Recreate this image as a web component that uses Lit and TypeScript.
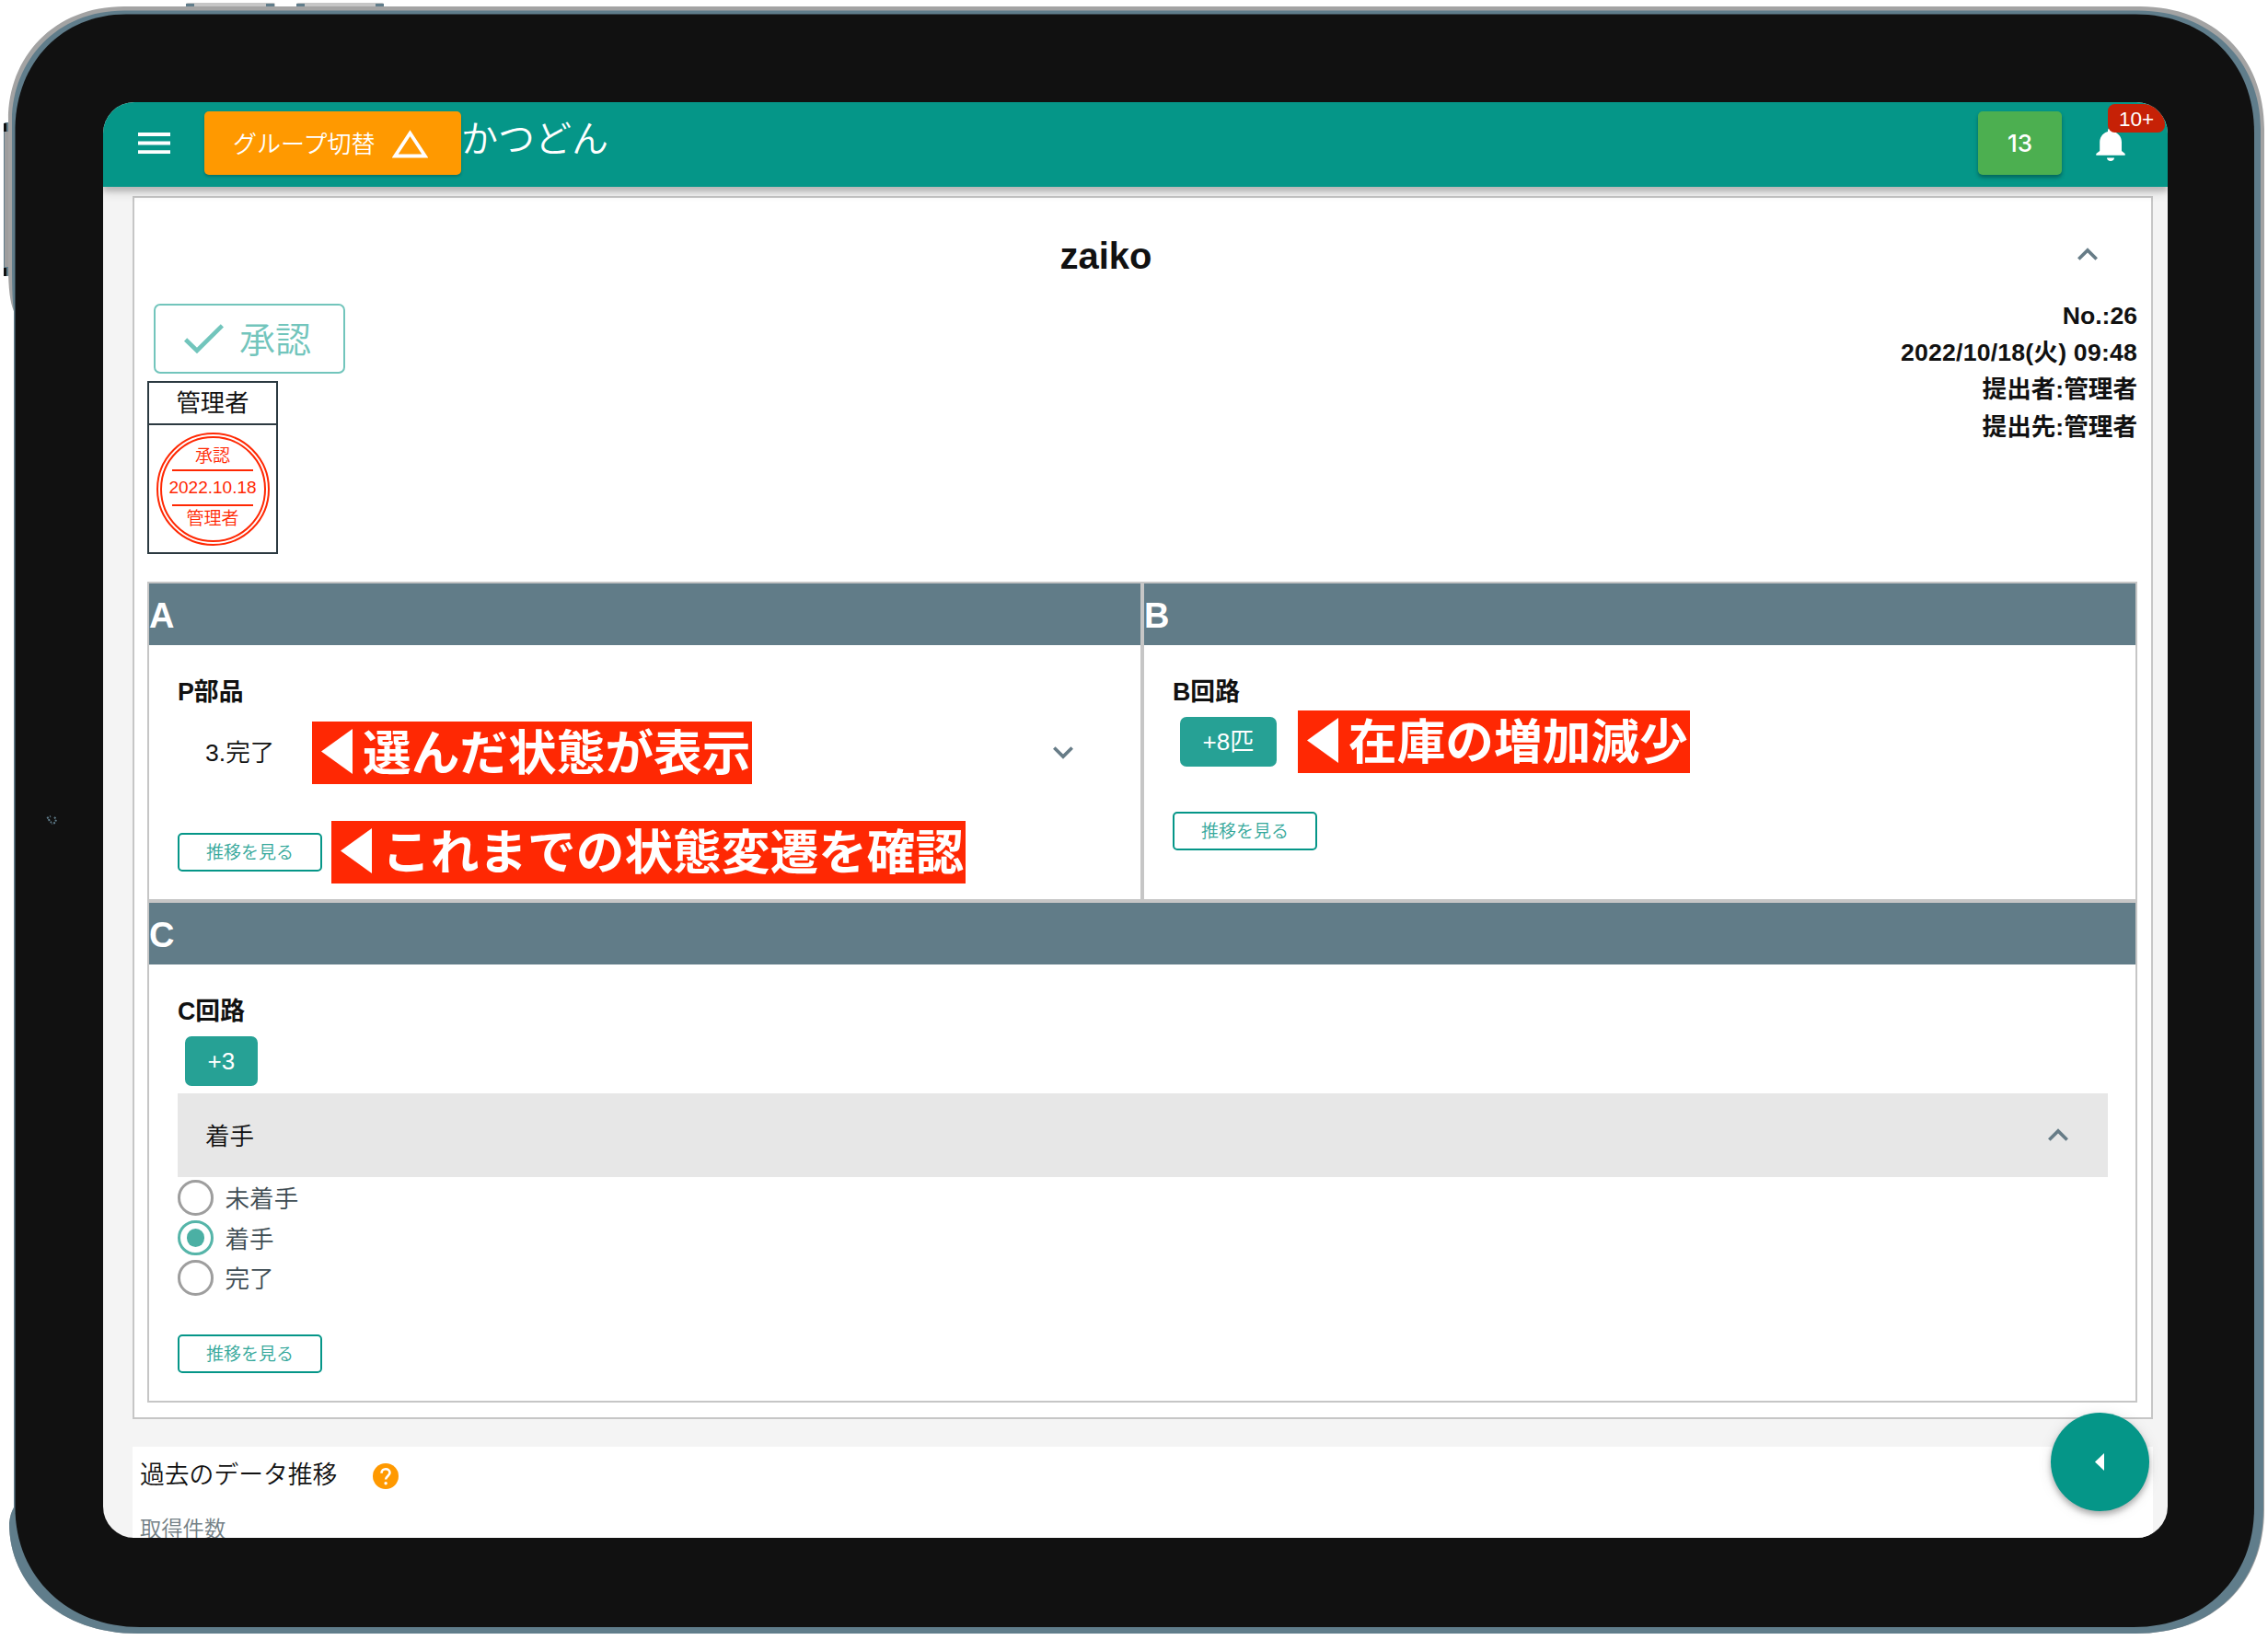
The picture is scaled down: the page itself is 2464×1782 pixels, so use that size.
import { LitElement, html, css, svg } from "lit";
import { customElement, property } from "lit/decorators.js";
import { classMap } from "lit/directives/class-map.js";

const chevron = (up: boolean) => html`<svg class="chev" width="22" height="14" viewBox="0 0 22 14" fill="none" stroke="currentColor" stroke-width="3.6">
  ${up ? svg`<path d="M1.3 12.6 11 2.9l9.7 9.7"/>` : svg`<path d="M1.3 1.4 11 11.1l9.7-9.7"/>`}
</svg>`;

@customElement("device-frame")
class DeviceFrame extends LitElement {
  static styles = css`
    :host { position: absolute; inset: 0; display: block; }
    svg { display: block; }
  `;
  render() {
    return html`<svg width="2464" height="1782" viewBox="0 0 2464 1782">
      <g fill="#c6c6c6">
        <rect x="202" y="3" width="97" height="6" rx="2"/>
        <rect x="322" y="3" width="95" height="6" rx="2"/>
      </g>
      <g fill="#607d8b">
        <rect x="202" y="4" width="9" height="4"/><rect x="289" y="4" width="9" height="4"/>
        <rect x="322" y="4" width="9" height="4"/><rect x="408" y="4" width="9" height="4"/>
        <rect x="4" y="133" width="7" height="167" rx="2.5"/>
      </g>
      <rect x="5" y="143" width="4" height="147" fill="#9d9d9d"/>
      <rect x="4" y="134" width="3" height="9" fill="#111"/>
      <rect x="4" y="291" width="3" height="9" fill="#111"/>
      <path fill="#a3a3a3" d="M135 7H2325C2405 7 2460 62 2460 140V1640C2460 1722 2405 1775 2320 1775H150C65 1775 10 1722 10 1655Q11 1645 15 1638V338Q9 325 9 290V130C9 62 58 7 135 7Z"/>
      <path fill="#607d8b" d="M135 11.5H2323C2401 11.5 2456 66 2456 140V1000L2459 1400V1640C2459 1722 2404 1775 2320 1775H150C65 1775 10 1722 10 1655Q11 1645 15 1638V338Q13 325 13 290V130C14 66 61 11.5 135 11.5Z"/>
      <path fill="#111" d="M137 15.5H2320C2396 15.5 2449 68 2449 144V1638C2449 1714 2396 1768 2318 1768H152C74 1768 16.500 1714 16.500 1638V138C18 68 67 15.5 137 15.5Z"/>
      <g fill="none" stroke="#607d8b" stroke-width="2" stroke-dasharray="2 1.500">
        <path d="M51 889l4-2M53 890q1 4 3 3M59 888l2 2-1 4-4 1"/>
      </g>
    </svg>`;
  }
}

@customElement("app-bar")
class AppBar extends LitElement {
  static styles = css`
    :host {
      display: flex; box-sizing: border-box; height: 92px; flex: none; padding-left: 38px;
      background: #059688; color: #fff; position: relative; z-index: 1;
      box-shadow: 0 5px 5px rgba(0,0,0,.16), 0 8px 10px rgba(0,0,0,.1);
    }
    .menu { align-self: center; margin-top: -4px; }
    .switch {
      margin: 10px 0 0 37px; width: 279px; height: 69px; box-sizing: border-box; padding-left: 31px;
      border-radius: 5px; background: #f90; display: flex; align-items: center; font-size: 26px;
      box-shadow: 0 2px 3px rgba(0,0,0,.22); font-weight: 350;
    }
    .switch span { margin-top: -3px; }
    .switch svg { margin: 2px 0 0 19px; }
    .name { font-size: 40px; line-height: 80px; margin-left: 0; font-weight: 350; }
    .space { flex: 1; }
    .count {
      margin-top: 10px; width: 91px; height: 69px; border-radius: 5px; background: #4caf50;
      font: 500 26px/70px Inter, "Liberation Sans", sans-serif; text-align: center;
      box-shadow: 0 3px 4px rgba(0,0,0,.32);
    }
    .bell { position: relative; width: 32px; margin: 28px 46px 0 37px; }
    .badge {
      position: absolute; left: 13px; top: -26px; width: 62px; height: 31px; border-radius: 8px 24px 8px 8px;
      background: #c62106; font-size: 22.5px; line-height: 33px; text-align: center; color: #fff;
    }
  `;
  render() {
    return html`
      <svg class="menu" width="35" height="23" fill="#fff"><path d="M0 0h35v4H0zM0 9.6h35v4H0zM0 19.2h35v4H0z"/></svg>
      <div class="switch"><span>グループ切替</span>
        <svg width="39" height="31" fill="none" stroke="#fff" stroke-width="3.8"><path d="M3.2 28.5 19.5 3.8l16.3 24.7z"/></svg>
      </div>
      <div class="name">かつどん</div>
      <div class="space"></div>
      <div class="count">13</div>
      <div class="bell">
        <svg width="32" height="36" viewBox="0 0 32 36" fill="#fff"><path d="M16 36c2.300 0 4-1.600 4-3.600h-8c0 2 1.700 3.600 4 3.600zM28 25V15.500C28 9.500 24 5.300 19 4V3a3 3 0 0 0-6 0v1C8 5.300 4.200 9.500 4.200 15.500V25L.3 28v1.800h31.400V28z"/></svg>
        <div class="badge">10+</div>
      </div>`;
  }
}

@customElement("approval-stamp")
class ApprovalStamp extends LitElement {
  static styles = css`
    :host { display: block; width: 142px; height: 188px; box-sizing: border-box; border: 2px solid #2c3a41; color: #111; }
    .role { height: 46px; line-height: 44px; font-size: 26.300px; text-align: center; border-bottom: 2px solid #2c3a41; box-sizing: border-box; }
    .body { height: 138px; display: grid; place-items: center; }
    .ring {
      width: 123px; height: 123px; box-sizing: border-box; border-radius: 50%; border: 6px double #ff2803;
      color: #ff2803; font-size: 19px; display: flex; flex-direction: column; align-items: center; font-weight: 350;
    }
    .top { box-sizing: border-box; line-height: 24px; padding-top: 8px; height: 29px; }
    .date { line-height: 36px; height: 36px; width: 88px; margin-top: 5px; border: solid #ff2803; border-width: 2px 0; display: flex; justify-content: center; white-space: nowrap; }
    .name { line-height: 24px; margin-top: 2px; }
  `;
  render() {
    return html`<div class="role">管理者</div>
      <div class="body"><div class="ring">
        <div class="top">承認</div><div class="date">2022.10.18</div><div class="name">管理者</div>
      </div></div>`;
  }
}

@customElement("history-button")
class HistoryButton extends LitElement {
  static styles = css`
    :host {
      display: block; box-sizing: border-box; width: 157px; height: 42px; border: 2px solid #059688;
      border-radius: 5px; color: #35a89b; font-size: 19px; line-height: 39px; text-align: center;
      font-weight: 350;
    }
  `;
  render() { return html`推移を見る`; }
}

@customElement("radio-row")
class RadioRow extends LitElement {
  @property() label = "";
  @property({ type: Boolean }) checked = false;
  static styles = css`
    :host { display: flex; align-items: center; height: 43.400px; font-size: 26.6px; color: #3e4c53; font-weight: 350; }
    .dot { width: 38.500px; height: 38.500px; box-sizing: border-box; border: 3px solid #9e9e9e; border-radius: 50%; margin-right: 13px; display: grid; place-items: center; }
    .dot.on { border-color: #56b5a9; }
    .dot.on::after { content: ""; width: 19.500px; height: 19.500px; border-radius: 50%; background: #4bb0a4; }
    .label { margin-top: -2px; }
  `;
  render() {
    return html`<span class=${classMap({ dot: true, on: this.checked })}></span><span class="label">${this.label}</span>`;
  }
}

@customElement("app-root")
class AppRoot extends LitElement {
  static styles = css`
    :host {
      display: block; position: relative; width: 2464px; height: 1782px; overflow: hidden; background: #fff;
      font-family: "Liberation Sans", "Noto Sans CJK JP", sans-serif; color: #111;
    }
    .wrap { display: flow-root; }
    .screen {
      position: relative; margin: 111px 0 0 112px; width: 2243px; height: 1559.500px; border-radius: 34px;
      overflow: hidden; background: #f4f4f4; display: flex; flex-direction: column;
    }
    .card {
      margin: 10px 0 0 32px; width: 2195px; height: 1329px; box-sizing: border-box; border: 2px solid #c6c6c6;
      background: #fff; padding: 0 15px; flex: none;
    }
    .title { display: flex; align-items: center; height: 110px; padding: 5px 43px 0 0; }
    .title b { flex: 1; text-align: center; font-size: 40px; line-height: 50px; padding-top: 6px; margin-left: -15px; }
    .chev { display: block; color: #677c87; flex: none; }
    .title .chev { margin-top: 1px; }
    .top { display: flex; justify-content: space-between; height: 302px; }
    .approve {
      width: 208px; height: 76px; box-sizing: border-box; border: 2px solid #72c5bc; border-radius: 7px; margin: 0 0 8px 7px;
      display: flex; align-items: center; padding-left: 31px; font-size: 39px; color: #72c5bc; font-weight: 350;
    }
    .approve svg { margin-right: 17px; }
    .approve span { margin-top: -4px; }
    .top > :first-child { margin-left: -1px; }
    .meta { text-align: right; font-weight: 700; font-size: 26.6px; line-height: 40.200px; margin-top: -7px; }
    .stamp { letter-spacing: .22px; }
    .grid {
      display: grid; grid-template: 347px 545px / 1081px 1081px; box-sizing: border-box; width: 2162px; margin-left: -1px;
    }
    .cell { border: 2px solid #c6c6c6; box-sizing: border-box; min-width: 0; }
    .cell.wide { grid-column: 1 / 3; }
    h2 { margin: 0; height: 67px; background: #617c88; color: #fff; font-size: 38px; line-height: 70px; }
    .inner { padding: 32px 30px 0 31px; }
    h3 { margin: 0; font-size: 26.8px; line-height: 39px; height: 46px; white-space: nowrap; }
    .select { display: flex; align-items: center; justify-content: space-between; height: 91px; padding: 0 43px 0 30px; font-size: 26.6px; font-weight: 350; }
    .select span { margin-top: -4px; }
    .select.open { background: #e7e7e7; margin-top: 8px; }
    .select.open span { margin-top: -3px; }
    .select.open .chev { margin-top: -2px; }
    .cellA .select { margin: -7px 0 42px; }
    .chip { margin-left: 7.500px; width: max-content; height: 54px; box-sizing: border-box; border-radius: 7px; background: #26a195; color: #fff; font-size: 26px; line-height: 55px; padding: 0 25px; }
    .cellB .chip { margin-bottom: 49px; }
    .radios { padding: 1px 0 40px; }
    .past { margin: 30px 0 0 32px; width: 2187px; height: 130px; background: #fff; padding-left: 8px; flex: none; font-weight: 350; }
    .past p { margin: 0; display: flex; align-items: center; height: 60px; font-size: 26.8px; }
    .past p span { margin-top: -4px; }
    .past p svg { margin: 4px 0 0 39px; }
    .past div { font-size: 23.300px; line-height: 60px; color: #737f85; }
    .fab {
      position: absolute; left: 2116px; top: 1423.500px; width: 107px; height: 107px; border-radius: 50%; background: #059688;
      display: grid; place-items: center; box-shadow: 0 4px 6px rgba(0,0,0,.28), 0 2px 16px rgba(0,0,0,.1);
    }
    .fab svg { margin-right: 1px; }
    .note { position: absolute; height: 68px; background: #ff2803; color: #fff; font-weight: 700; font-size: 52.700px; line-height: 69px; white-space: nowrap; display: flex; box-sizing: border-box; padding-left: 2px; }
    .note svg { flex: none; margin: 8px 11px 0 8px; }
    .n1 { left: 339px; top: 784px; width: 478px; }
    .n2 { left: 360px; top: 892px; width: 689px; }
    .n3 { left: 1410px; top: 771.500px; width: 426px; }
  `;

  private note(cls: string, text: string) {
    return html`<div class="note ${cls}"><svg width="34" height="49" fill="#fff"><path d="M34 0v49L0 24.500z"/></svg>${text}</div>`;
  }

  render() {
    return html`
      <device-frame></device-frame>
      <div class="wrap"><div class="screen">
        <app-bar></app-bar>
        <div class="card">
          <div class="title"><b>zaiko</b>${chevron(true)}</div>
          <div class="top">
            <div>
              <div class="approve">
                <svg width="43" height="32" viewBox="0 0 43 32" fill="none" stroke="currentColor" stroke-width="4.600"><path d="M1.600 17 14 29 41.400 1.800"/></svg><span>承認</span>
              </div>
              <approval-stamp></approval-stamp>
            </div>
            <div class="meta">
              <div>No.:26</div><div class="stamp">2022/10/18(火) 09:48</div><div>提出者:管理者</div><div>提出先:管理者</div>
            </div>
          </div>
          <div class="grid">
            <div class="cell cellA">
              <h2>A</h2>
              <div class="inner">
                <h3>P部品</h3>
                <div class="select"><span>3.完了</span>${chevron(false)}</div>
                <history-button></history-button>
              </div>
            </div>
            <div class="cell cellB">
              <h2>B</h2>
              <div class="inner">
                <h3>B回路</h3>
                <div class="chip">+8匹</div>
                <history-button></history-button>
              </div>
            </div>
            <div class="cell wide">
              <h2>C</h2>
              <div class="inner">
                <h3>C回路</h3>
                <div class="chip">+3</div>
                <div class="select open"><span>着手</span>${chevron(true)}</div>
                <div class="radios">
                  <radio-row label="未着手"></radio-row>
                  <radio-row label="着手" checked></radio-row>
                  <radio-row label="完了"></radio-row>
                </div>
                <history-button></history-button>
              </div>
            </div>
          </div>
        </div>
        <div class="past">
          <p><span>過去のデータ推移</span>
            <svg width="28" height="28" viewBox="0 0 28 28"><circle cx="14" cy="14" r="14" fill="#f90"/><path d="M9.500 10.800C9.500 8 11.400 6.200 14 6.200s4.500 1.700 4.500 4.100c0 3.200-4.400 3.600-4.400 7.300" fill="none" stroke="#fff" stroke-width="2.600"/><circle cx="14.100" cy="21.800" r="1.700" fill="#fff"/></svg>
          </p>
          <div>取得件数</div>
        </div>
        <div class="fab"><svg width="10" height="19" fill="#fff"><path d="M10 0v19L0 9.500z"/></svg></div>
      </div></div>
      ${this.note("n1", "選んだ状態が表示")}
      ${this.note("n2", "これまでの状態変遷を確認")}
      ${this.note("n3", "在庫の増加減少")}
    `;
  }
}
